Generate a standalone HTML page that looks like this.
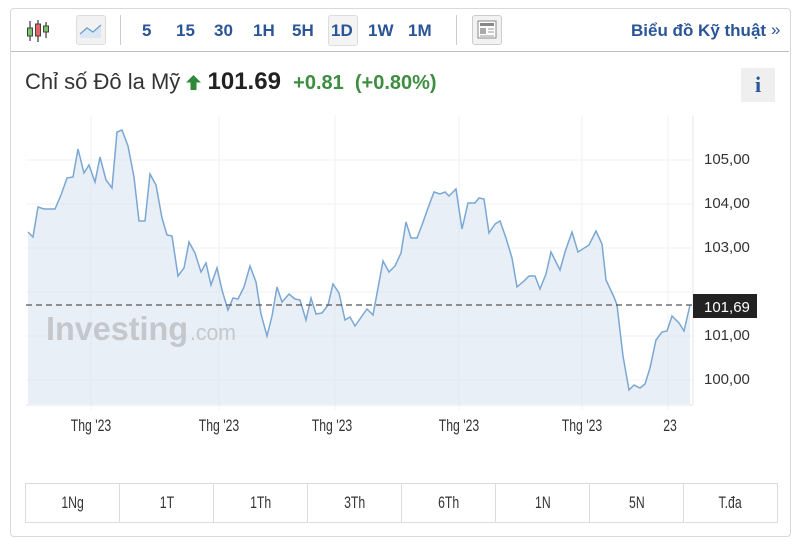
<!DOCTYPE html>
<html><head><meta charset="utf-8"><style>
body{margin:0;background:#fff;width:800px;height:551px;position:relative;font-family:"Liberation Sans",sans-serif;overflow:hidden}
.box{position:absolute;left:10px;top:8px;width:779px;height:527px;border:1px solid #d9d9d9;border-radius:4px}
.hdr{position:absolute;left:11px;top:9px;width:778px;height:42px;border-bottom:1px solid #bfbfbf}
.tf{position:absolute;top:21px;font-size:17px;font-weight:bold;color:#2a5597}
.btns{position:absolute;left:25px;top:483px;width:751px;height:38px;border:1px solid #dcdcdc;display:flex}
.btns div{flex:1;border-right:1px solid #dcdcdc;text-align:center;line-height:38px;font-size:17px;color:#333}
.btns div span{display:inline-block;transform:scaleX(0.72)}
.btns div:last-child{border-right:none}
.xl{position:absolute;top:416px;font-size:17px;color:#333;transform:translateX(-50%) scaleX(0.72)}
.yl{position:absolute;left:704px;font-size:15px;color:#333}
</style></head><body>
<div class="box"></div>
<div class="hdr"></div>
<svg style="position:absolute;left:24px;top:18px" width="28" height="26">
<line x1="6" y1="3" x2="6" y2="23" stroke="#444" stroke-width="1.3"/><rect x="3.5" y="10" width="5" height="8" fill="#7cc06a" stroke="#444"/>
<line x1="14" y1="2" x2="14" y2="24" stroke="#444" stroke-width="1.3"/><rect x="11.5" y="6" width="5" height="12" fill="#e06666" stroke="#444"/>
<line x1="22" y1="4" x2="22" y2="20" stroke="#444" stroke-width="1.3"/><rect x="19.5" y="8" width="5" height="6" fill="#7cc06a" stroke="#444"/>
</svg>
<div style="position:absolute;left:76px;top:15px;width:28px;height:28px;border:1px solid #ddd;border-radius:3px;background:#f2f2f2"></div>
<svg style="position:absolute;left:79px;top:20px" width="24" height="20"><path d="M1 14 L8 8 L14 12 L22 5 L22 18 L1 18Z" fill="#dce7f4"/><path d="M1 14 L8 8 L14 12 L22 5" fill="none" stroke="#6f9fd2" stroke-width="1.3"/></svg>
<div style="position:absolute;left:120px;top:15px;width:1px;height:30px;background:#ccc"></div>
<span class="tf" style="left:142px">5</span><span class="tf" style="left:176px">15</span><span class="tf" style="left:214px">30</span><span class="tf" style="left:253px">1H</span><span class="tf" style="left:292px">5H</span>
<div style="position:absolute;left:328px;top:15px;width:28px;height:29px;border:1px solid #ddd;border-radius:3px;background:#f4f4f4"></div>
<span class="tf" style="left:331px">1D</span><span class="tf" style="left:368px">1W</span><span class="tf" style="left:408px">1M</span>
<div style="position:absolute;left:456px;top:15px;width:1px;height:30px;background:#ccc"></div>
<div style="position:absolute;left:472px;top:15px;width:28px;height:28px;border:1px solid #ccc;border-radius:3px;background:#f2f2f2"></div>
<svg style="position:absolute;left:477px;top:20px" width="20" height="19"><rect x="1" y="1" width="18" height="17" fill="#fff" stroke="#888"/><rect x="3" y="3" width="14" height="3" fill="#888"/><rect x="3" y="8" width="6" height="6" fill="#aaa"/><line x1="11" y1="9" x2="17" y2="9" stroke="#999"/><line x1="11" y1="12" x2="17" y2="12" stroke="#999"/><line x1="3" y1="16" x2="17" y2="16" stroke="#999"/></svg>
<span style="position:absolute;left:631px;top:21px;font-size:17px;font-weight:bold;color:#2a5597">Biểu đồ Kỹ thuật</span>
<span style="position:absolute;left:771px;top:20px;font-size:17px;color:#2a5597">»</span>
<div style="position:absolute;left:25px;top:68px;font-size:22px;color:#333;white-space:nowrap">Chỉ số Đô la Mỹ <svg width="15" height="15" style="vertical-align:-1px"><path d="M7.5 0 L15 7.5 L10.5 7.5 L10.5 15 L4.5 15 L4.5 7.5 L0 7.5Z" fill="#2d8a3a"/></svg> <b style="font-size:24px;color:#222">101.69</b> &nbsp;<b style="color:#3e8e41;font-size:20px">+0.81 &nbsp;(+0.80%)</b></div>
<div style="position:absolute;left:741px;top:68px;width:34px;height:34px;background:#efefef;text-align:center;line-height:34px;font-family:'Liberation Serif',serif;font-weight:bold;font-size:22px;color:#2a5597">i</div>
<svg style="position:absolute;left:0;top:0" width="800" height="551">
<g stroke="#eef1f5" stroke-width="1">
<line x1="26" y1="160" x2="692" y2="160"/><line x1="26" y1="204" x2="692" y2="204"/><line x1="26" y1="248" x2="692" y2="248"/><line x1="26" y1="292" x2="692" y2="292"/><line x1="26" y1="336" x2="692" y2="336"/><line x1="26" y1="380" x2="692" y2="380"/>
<line x1="91" y1="115" x2="91" y2="410"/><line x1="219" y1="115" x2="219" y2="410"/><line x1="335" y1="115" x2="335" y2="410"/><line x1="459" y1="115" x2="459" y2="410"/><line x1="582" y1="115" x2="582" y2="410"/><line x1="668" y1="115" x2="668" y2="410"/>
</g>
<line x1="693" y1="116" x2="693" y2="405" stroke="#e3e6ea"/>
<line x1="26" y1="405" x2="693" y2="405" stroke="#e3e6ea"/>
<path d="M28 232 L33 237 L38 207 L44 209 L55 209 L61 195 L67 178 L73 177 L78 149 L84 173 L89 165 L95 182 L100 157 L106 180 L112 188 L117 132 L122 130 L128 146 L134 177 L139 221 L145 221 L150 174 L156 185 L162 218 L167 235 L172 236 L178 276 L184 268 L189 242 L195 253 L201 272 L206 263 L211 285 L217 268 L222 290 L228 310 L233 298 L238 299 L244 287 L250 266 L256 282 L261 314 L267 336 L272 316 L277 287 L282 302 L289 294 L295 299 L300 300 L306 320 L311 298 L316 314 L322 313 L328 305 L333 284 L339 293 L345 320 L350 317 L355 326 L362 316 L367 309 L373 315 L383 261 L389 272 L395 266 L401 253 L406 222 L411 238 L417 238 L422 225 L428 208 L434 192 L440 194 L445 192 L449 196 L456 189 L462 229 L468 203 L475 203 L479 198 L484 199 L489 233 L495 224 L500 221 L506 238 L512 258 L517 287 L524 281 L529 276 L535 276 L540 289 L546 274 L551 252 L560 270 L565 252 L572 232 L578 252 L589 245 L596 231 L602 244 L606 280 L614 297 L617 305 L623 356 L629 390 L634 385 L640 388 L645 384 L650 368 L656 340 L662 332 L667 331 L672 316 L679 323 L684 331 L690 305 L690 404 L28 404Z" fill="#dbe5f0" fill-opacity="0.6"/>
<path d="M28 232 L33 237 L38 207 L44 209 L55 209 L61 195 L67 178 L73 177 L78 149 L84 173 L89 165 L95 182 L100 157 L106 180 L112 188 L117 132 L122 130 L128 146 L134 177 L139 221 L145 221 L150 174 L156 185 L162 218 L167 235 L172 236 L178 276 L184 268 L189 242 L195 253 L201 272 L206 263 L211 285 L217 268 L222 290 L228 310 L233 298 L238 299 L244 287 L250 266 L256 282 L261 314 L267 336 L272 316 L277 287 L282 302 L289 294 L295 299 L300 300 L306 320 L311 298 L316 314 L322 313 L328 305 L333 284 L339 293 L345 320 L350 317 L355 326 L362 316 L367 309 L373 315 L383 261 L389 272 L395 266 L401 253 L406 222 L411 238 L417 238 L422 225 L428 208 L434 192 L440 194 L445 192 L449 196 L456 189 L462 229 L468 203 L475 203 L479 198 L484 199 L489 233 L495 224 L500 221 L506 238 L512 258 L517 287 L524 281 L529 276 L535 276 L540 289 L546 274 L551 252 L560 270 L565 252 L572 232 L578 252 L589 245 L596 231 L602 244 L606 280 L614 297 L617 305 L623 356 L629 390 L634 385 L640 388 L645 384 L650 368 L656 340 L662 332 L667 331 L672 316 L679 323 L684 331 L690 305" fill="none" stroke="#7aa7d4" stroke-width="1.5"/>
<line x1="26" y1="305" x2="693" y2="305" stroke="#555" stroke-width="1.2" stroke-dasharray="6,4"/>
<rect x="693" y="294" width="64" height="24" fill="#222"/>
<text x="704" y="312" font-size="15" fill="#fff" font-family="Liberation Sans">101,69</text>
<text x="46" y="340" font-size="33" font-weight="bold" fill="#c4c7cb" font-family="Liberation Sans" textLength="142" lengthAdjust="spacingAndGlyphs">Investing</text>
<text x="190" y="340" font-size="22" fill="#c4c7cb" font-family="Liberation Sans" textLength="46" lengthAdjust="spacingAndGlyphs">.com</text>
</svg>
<span class="yl" style="top:151px">105,00</span><span class="yl" style="top:195px">104,00</span><span class="yl" style="top:239px">103,00</span><span class="yl" style="top:327px">101,00</span><span class="yl" style="top:371px">100,00</span>
<span class="xl" style="left:91px">Thg '23</span><span class="xl" style="left:219px">Thg '23</span><span class="xl" style="left:332px">Thg '23</span><span class="xl" style="left:459px">Thg '23</span><span class="xl" style="left:582px">Thg '23</span><span class="xl" style="left:670px">23</span>
<div class="btns"><div><span>1Ng</span></div><div><span>1T</span></div><div><span>1Th</span></div><div><span>3Th</span></div><div><span>6Th</span></div><div><span>1N</span></div><div><span>5N</span></div><div><span>T.đa</span></div></div>
</body></html>
